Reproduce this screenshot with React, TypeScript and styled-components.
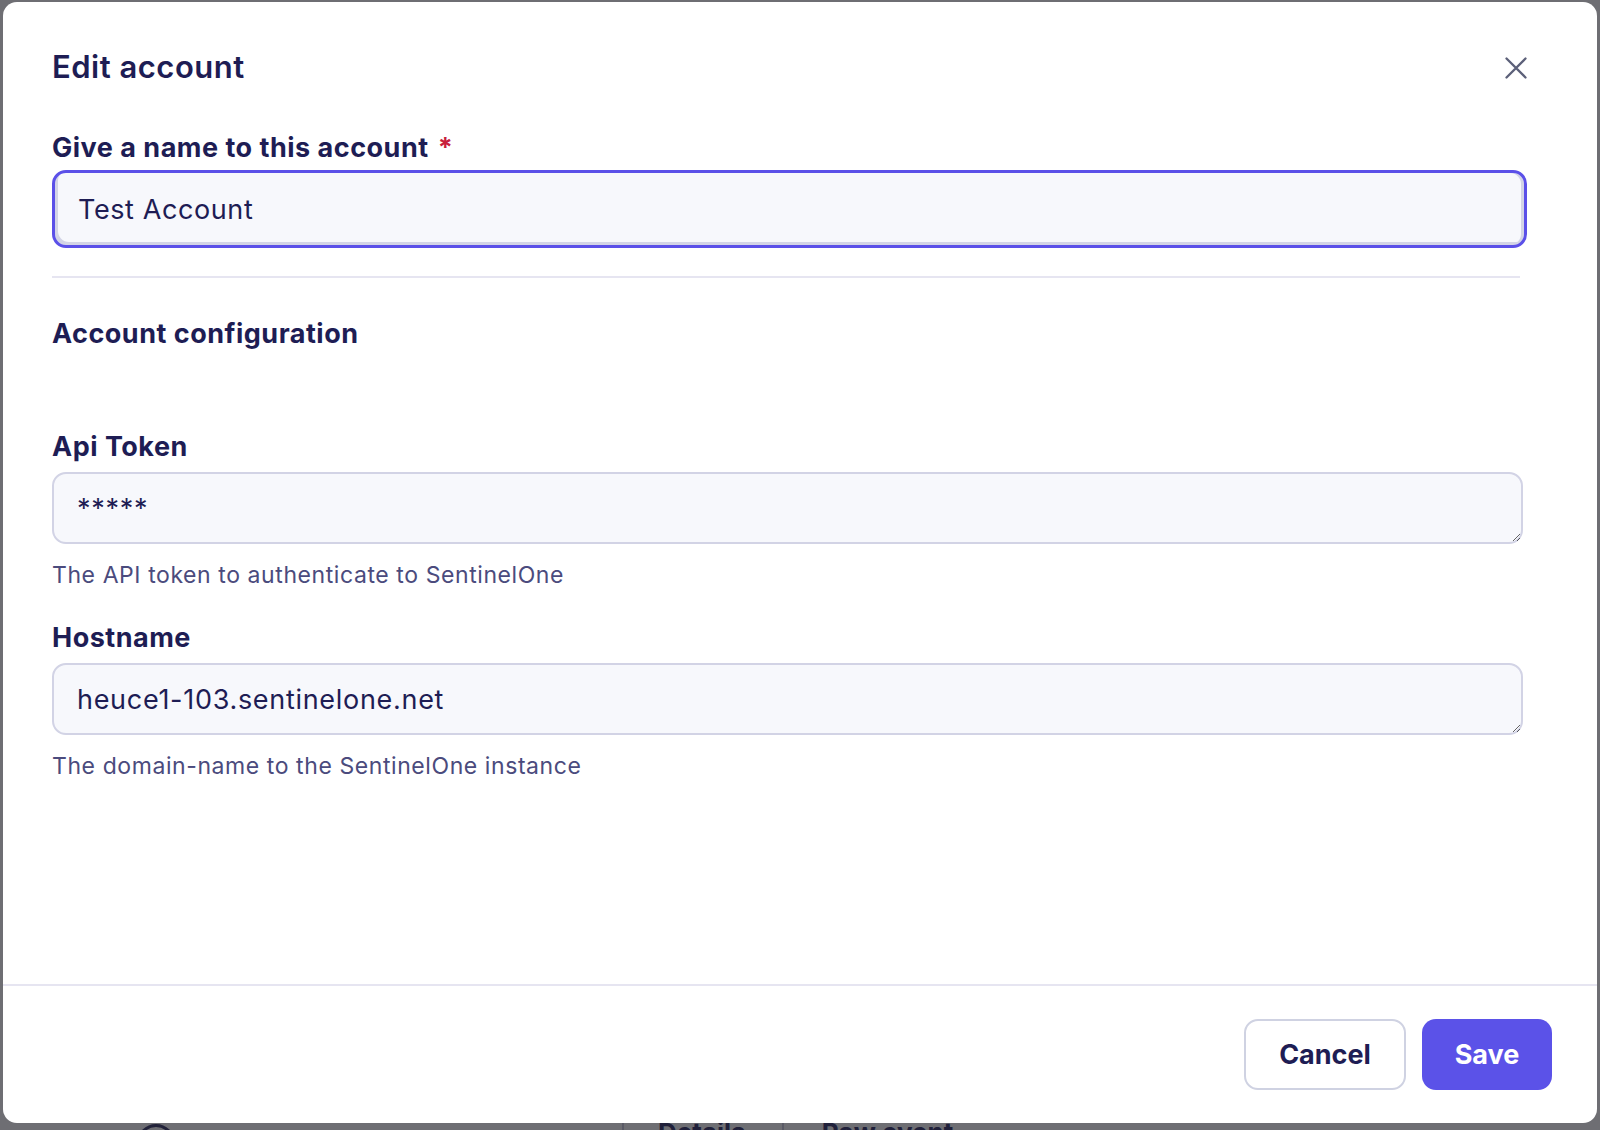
import React from "react";
import styled, { createGlobalStyle } from "styled-components";

const GlobalStyle = createGlobalStyle`
  html, body {
    margin: 0;
    padding: 0;
    background: #6e6e73;
    font-family: Inter, "Noto Sans", "Liberation Sans", sans-serif;
  }
  * { box-sizing: border-box; }
`;

const Screen = styled.div`
  width: 1600px;
  height: 1130px;
  overflow: hidden;
  display: flex;
  flex-direction: column;
`;

const Dialog = styled.div`
  margin: 2px 3px 0 3px;
  height: 1121px;
  flex: none;
  background: #ffffff;
  border-radius: 14px;
  display: flex;
  flex-direction: column;
  position: relative;
  z-index: 2;
`;

const Body = styled.div`
  flex: 1;
  padding: 47px 70px 0 49px;
  display: flex;
  flex-direction: column;
`;

const Header = styled.div`
  display: flex;
  align-items: center;
  justify-content: space-between;
  height: 36px;
`;

const Title = styled.h2`
  margin: 0;
  font-size: 31px;
  line-height: 36px;
  font-weight: 600;
  letter-spacing: 0.5px;
  color: #1e1d54;
`;

const CloseButton = styled.button`
  width: 22px;
  height: 22px;
  padding: 0;
  margin-top: 2px;
  border: none;
  background: transparent;
  display: flex;
  align-items: center;
  justify-content: center;
  cursor: pointer;
`;

const Label = styled.label<{ $top: number }>`
  display: block;
  margin-top: ${(p) => p.$top}px;
  font-size: 27px;
  line-height: 30px;
  font-weight: 700;
  letter-spacing: 0.5px;
  color: #1e1d54;
`;

const Required = styled.span`
  color: #c8203c;
  margin-left: 9px;
`;

const NameInput = styled.input`
  display: block;
  width: 100%;
  margin-top: 7px;
  height: 78px;
  border: 3px solid #5b50e8;
  border-radius: 14px;
  background: #f7f8fc;
  padding: 0 23px;
  font-family: inherit;
  font-size: 27px;
  letter-spacing: 0.6px;
  color: #1e1d54;
  outline: none;
  box-shadow: inset 3px -3px 0 #d3d4e6, inset -3px 0 0 #d3d4e6;
`;

const Divider = styled.div`
  margin: 28px 7px 0 0;
  height: 2px;
  background: #e6e5f1;
`;

const SectionTitle = styled.h3`
  margin: 40px 0 0;
  font-size: 27px;
  line-height: 32px;
  font-weight: 700;
  letter-spacing: 0.5px;
  color: #1e1d54;
`;

const TextArea = styled.textarea`
  display: block;
  width: calc(100% - 4px);
  margin-top: 10px;
  height: 72px;
  border: 2px solid #d2d3e5;
  border-radius: 14px;
  background: #f7f8fc;
  padding: 20px 23px 18px;
  font-family: inherit;
  font-size: 27px;
  line-height: 30px;
  letter-spacing: 0.7px;
  color: #1e1d54;
  resize: vertical;
  outline: none;
`;

const Help = styled.p`
  margin: 17px 0 0;
  font-size: 23px;
  line-height: 28px;
  letter-spacing: 0.58px;
  color: #4b4b7d;
`;

const Footer = styled.div`
  border-top: 2px solid #e6e5f1;
  padding: 33px 45px 33px;
  display: flex;
  justify-content: flex-end;
  gap: 16px;
`;

const Button = styled.button<{ $primary?: boolean; $width: number }>`
  width: ${(p) => p.$width}px;
  height: 71px;
  border-radius: 14px;
  font-family: inherit;
  font-size: 27px;
  font-weight: 700;
  cursor: pointer;
  border: ${(p) => (p.$primary ? "none" : "2px solid #cfd2e2")};
  background: ${(p) => (p.$primary ? "#5b52e8" : "#ffffff")};
  color: ${(p) => (p.$primary ? "#ffffff" : "#1e1d54")};
`;

const BehindStrip = styled.div`
  height: 7px;
  overflow: hidden;
  display: flex;
  align-items: flex-start;
  padding-left: 137px;
`;

const BehindIcon = styled.div`
  width: 38px;
  height: 38px;
  border: 3px solid #22223a;
  border-radius: 50%;
  margin-top: 1px;
`;

const BehindSep = styled.div<{ $gap: number }>`
  width: 2px;
  height: 30px;
  background: #5a5a66;
  margin-left: ${(p) => p.$gap}px;
`;

const BehindTab = styled.span<{ $gap: number }>`
  margin-left: ${(p) => p.$gap}px;
  margin-top: -5px;
  font-size: 26px;
  line-height: 30px;
  font-weight: 700;
  color: #20203a;
`;

const CloseIcon = () => (
  <svg width="22" height="22" viewBox="0 0 22 22" fill="none">
    <path
      d="M1.5 1.5 L20.5 20.5 M20.5 1.5 L1.5 20.5"
      stroke="#5c6079"
      strokeWidth="2.3"
      strokeLinecap="round"
    />
  </svg>
);

export default function App() {
  return (
    <>
      <GlobalStyle />
      <Screen>
        <Dialog role="dialog" aria-label="Edit account">
          <Body>
            <Header>
              <Title>Edit account</Title>
              <CloseButton aria-label="Close">
                <CloseIcon />
              </CloseButton>
            </Header>

            <Label $top={48}>
              Give a name to this account<Required>*</Required>
            </Label>
            <NameInput defaultValue="Test Account" />

            <Divider />

            <SectionTitle>Account configuration</SectionTitle>

            <Label $top={82}>Api Token</Label>
            <TextArea defaultValue="*****" />
            <Help>The API token to authenticate to SentinelOne</Help>

            <Label $top={34}>Hostname</Label>
            <TextArea defaultValue="heuce1-103.sentinelone.net" />
            <Help>The domain-name to the SentinelOne instance</Help>
          </Body>
          <Footer>
            <Button $width={162}>Cancel</Button>
            <Button $primary $width={130}>
              Save
            </Button>
          </Footer>
        </Dialog>
        <BehindStrip>
          <BehindIcon />
          <BehindSep $gap={447} />
          <BehindTab $gap={34}>Details</BehindTab>
          <BehindSep $gap={36} />
          <BehindTab $gap={38}>Raw event</BehindTab>
        </BehindStrip>
      </Screen>
    </>
  );
}
